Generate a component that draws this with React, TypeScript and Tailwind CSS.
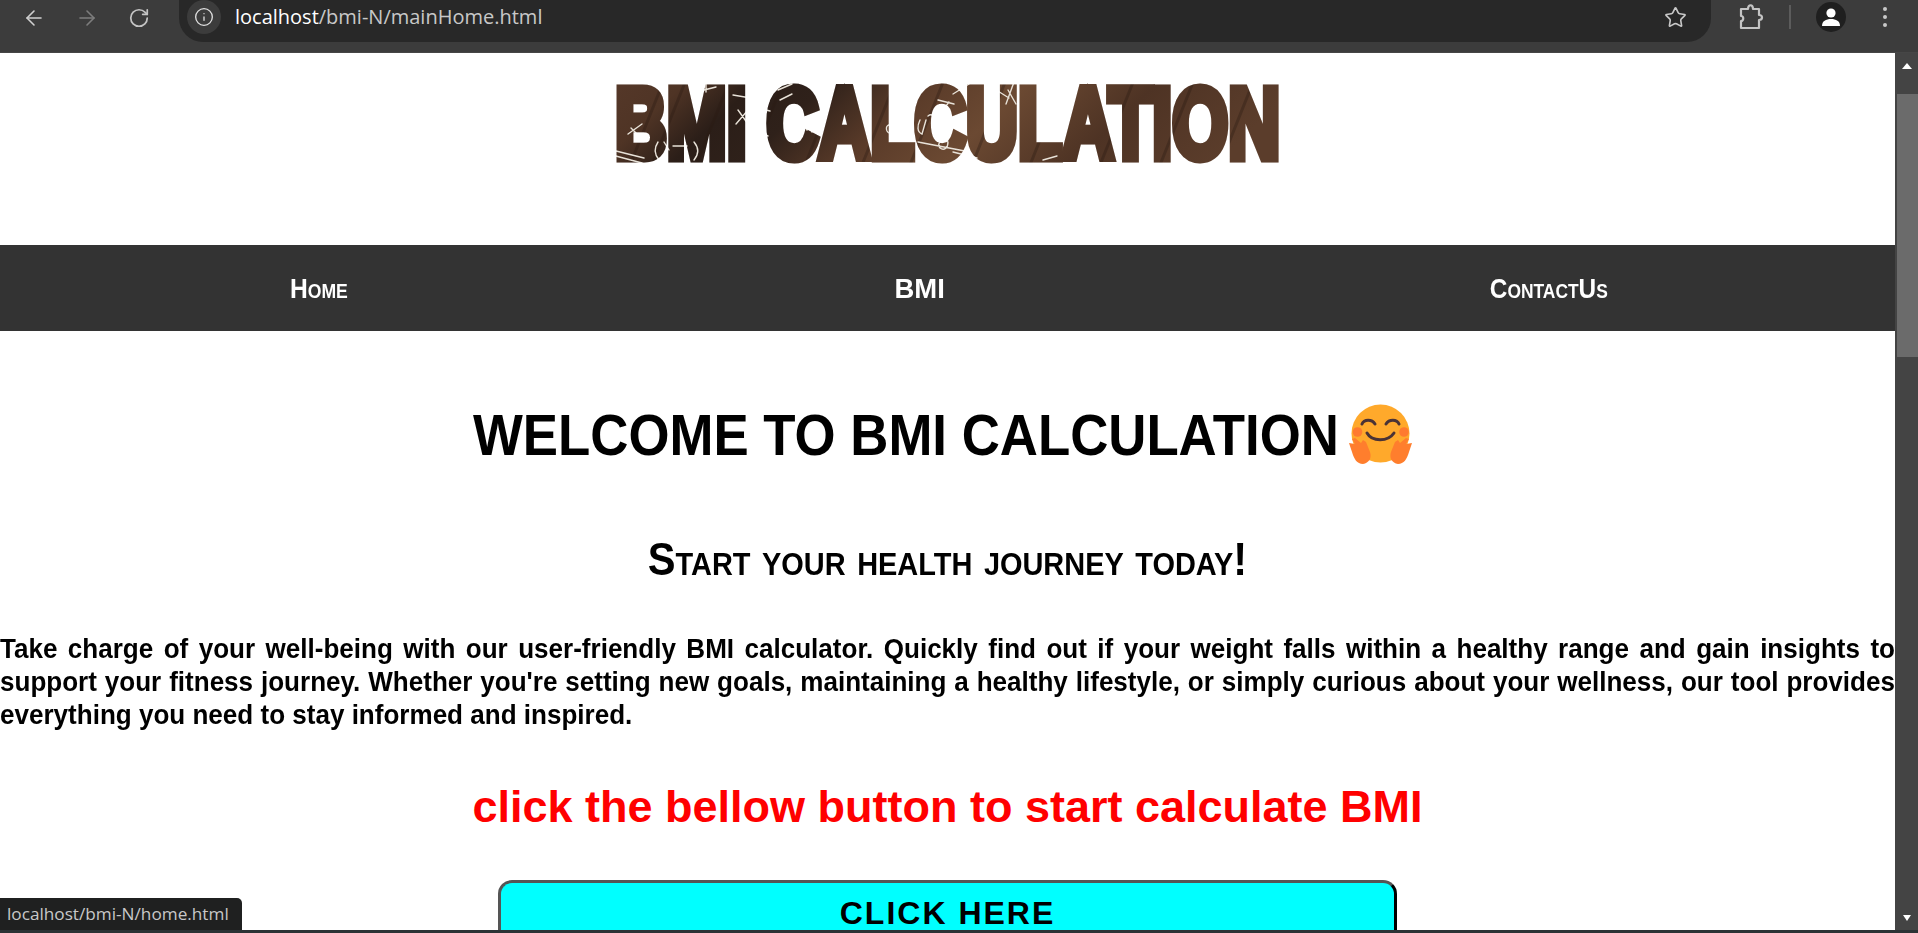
import { ArrowLeft, ArrowRight, RotateCw, Info, Star } from "lucide-react";

function Hug() {
  return (
    <svg width="66" height="62" viewBox="0 0 66 62" className="shrink-0 ml-[11px]">
      <circle cx="32.5" cy="29.5" r="29" fill="#FFA92B" />
      <circle cx="9.5" cy="28" r="4.8" fill="#FF7A2F" />
      <circle cx="56" cy="28" r="4.8" fill="#FF7A2F" />
      <path d="M14 20c2-5 10-5 13 0M38 20c3-5 11-5 13 0M19 29c5 9 21 9 27 0" fill="none" stroke="#4A3336" strokeWidth="3" strokeLinecap="round" />
      <path d="M1 39l6 1-3-5 3-1 6 5 2-3 3 2 4 10c2 6-1 11-7 12-6 0-9-5-11-12z" fill="#FF7E2D" />
      <path d="M64 39l-6 1 3-5-3-1-6 5-2-3-3 2-4 10c-2 6 1 11 7 12 6 0 9-5 11-12z" fill="#FF7E2D" />
    </svg>
  );
}

function Logo() {
  const grain = [
    "M30 100L70 0", "M52 100L92 0", "M96 100L136 0", "M150 100L190 0", "M205 100L245 0", "M262 100L302 0",
    "M310 100L350 0", "M372 100L412 0", "M430 100L470 0", "M500 100L540 0", "M560 100L600 0", "M620 100L660 0",
  ];
  return (
    <svg width="700" height="100" viewBox="0 0 700 100" className="shrink-0">
      <defs>
        <linearGradient id="wood" x1="0" y1="0" x2="1" y2="0.15">
          <stop offset="0" stopColor="#57392a" />
          <stop offset="0.14" stopColor="#4f3425" />
          <stop offset="0.24" stopColor="#2b1e18" />
          <stop offset="0.34" stopColor="#2f211a" />
          <stop offset="0.48" stopColor="#5a3b29" />
          <stop offset="0.62" stopColor="#6b4932" />
          <stop offset="0.8" stopColor="#4e3324" />
          <stop offset="1" stopColor="#5b3d2b" />
        </linearGradient>
        <mask id="logoText">
          <text
            x="17"
            y="87.5"
            fontFamily="'Liberation Sans', sans-serif"
            fontWeight="700"
            fontSize="100"
            textLength="665"
            lengthAdjust="spacingAndGlyphs"
            fill="white"
            stroke="white"
            strokeWidth="9"
            strokeLinejoin="miter"
          >
            BMI CALCULATION
          </text>
        </mask>
      </defs>
      <g mask="url(#logoText)">
        <rect width="700" height="100" fill="url(#wood)" />
        <g stroke="#2a1a12" strokeWidth="3" opacity="0.35">
          {grain.map((d) => (
            <path key={d} d={d} />
          ))}
        </g>
        <g fill="none" stroke="#e8e2d8" strokeWidth="1.4" strokeLinecap="round">
          <path d="M14 80l32 8M14 85l30 8M30 64l14-10M33 58l8 8M60 72c-4 6-4 12 1 18M66 72l5 8M75 76h14M96 72c5 6 5 12 0 18M106 20l12-3M108 22v-8" />
          <path d="M135 25l36 6M140 40l10 14M150 40l-12 14M160 38l12 3M154 60l16 6M180 20l14-6M182 30l12-6M190 52c6 6 10 6 14 0l5 8 6-10M210 50l4 12M218 50l4 12" />
          <path d="M295 56c-4-3-8 0-6 5 2 4 7 3 8-1M300 62h12M302 67h12M322 50c-3 6-3 12 2 14l4-14M330 46c4-3 8 1 4 6l6 10M342 62l8 6M350 72c-6-3-12 1-8 6 4 3 8 0 8-6M320 72l52 10M355 82l24 6" />
          <path d="M355 24l16-10M340 30l16 4M345 40l6-8M395 18l16 10M410 20l8 14M416 12l-8 22M445 90l14-4" />
        </g>
      </g>
    </svg>
  );
}

export default function App() {
  return (
    <div className="h-[933px] w-[1918px] overflow-hidden flex flex-col relative bg-white font-['Liberation_Sans',sans-serif]">
      <div className="h-[53px] shrink-0 bg-[#3c3c3c] border-b border-[#464646] flex items-start text-[#c8c8c8]">
        <div className="flex items-center h-[36px] pl-[22px] gap-[29px] shrink-0">
          <ArrowLeft size={24} strokeWidth={1.6} className="text-[#d0d0d0]" />
          <ArrowRight size={24} strokeWidth={1.6} className="text-[#7d7d7d]" />
          <RotateCw size={22} strokeWidth={1.9} className="text-[#c4c4c4]" />
        </div>
        <div className="ml-[29px] w-[1532px] h-[42px] bg-[#282828] rounded-b-[24px] flex items-center pl-[8px] pr-[24px]">
          <div className="w-[34px] h-[34px] rounded-full bg-[#3c3c3c] flex items-center justify-center -mt-[8px]">
            <Info size={20} strokeWidth={1.6} className="text-[#e0e0e0]" />
          </div>
          <div className="ml-[14px] -mt-[8px] text-[20px] font-['Open_Sans',sans-serif] text-[#c8c8c8] leading-[32px]">
            <span className="text-white">localhost</span>/bmi-N/mainHome.html
          </div>
          <Star size={23} strokeWidth={1.7} className="ml-auto -mt-[8px] text-[#c8c8c8]" />
        </div>
        <div className="flex items-center h-[33px] ml-[27px]">
          <svg width="26" height="28" viewBox="0 0 26 28" fill="none" stroke="#c4c4c4" strokeWidth="2.2" strokeLinejoin="round">
            <path d="M3 6h7c0-5 5-5 5 0h6v6c4 0 4 5 0 5v8H3v-7c3 0 3-5 0-5z" />
          </svg>
          <div className="w-[2px] h-[24px] bg-[#5c5c5c] ml-[25px]" />
          <div className="w-[30px] h-[30px] rounded-full bg-[#1f1f1f] ml-[25px] flex items-center justify-center">
            <svg width="20" height="20" viewBox="0 0 20 20" fill="white">
              <circle cx="10" cy="6" r="4.6" />
              <path d="M1 19c0-5 4-7 9-7s9 2 9 7z" />
            </svg>
          </div>
          <div className="flex flex-col gap-[4px] ml-[37px]">
            <span className="w-[4px] h-[4px] rounded-full bg-[#c8c8c8]" />
            <span className="w-[4px] h-[4px] rounded-full bg-[#c8c8c8]" />
            <span className="w-[4px] h-[4px] rounded-full bg-[#c8c8c8]" />
          </div>
        </div>
      </div>

      <div className="flex flex-1 min-h-0">
        <main className="flex-1 min-w-0 overflow-hidden text-black">
          <header className="h-[192px] flex justify-center pt-[17px]">
            <h1 className="contents">
              <Logo />
            </h1>
          </header>
          <nav className="h-[86px] bg-[#333333] flex justify-between items-center pl-[289px] pr-[288px] text-white font-bold text-[28px] [font-variant:small-caps]">
            <a className="w-[59px] flex justify-center whitespace-nowrap mt-[2px]"><span className="inline-block scale-x-[0.88]">Home</span></a>
            <a className="w-[50px] flex justify-center whitespace-nowrap mt-[2px]"><span className="inline-block scale-x-[0.98]">BMI</span></a>
            <a className="w-[116px] flex justify-center whitespace-nowrap mt-[2px]"><span className="inline-block scale-x-[0.87]">ContactUs</span></a>
          </nav>
          <section className="flex items-center justify-center mt-[68px] h-[72px] pr-[8px]">
            <h2 className="w-[864px] shrink-0 font-bold text-[58px] leading-none whitespace-nowrap">
              <span className="inline-block origin-left scale-x-[0.91]">WELCOME TO BMI CALCULATION</span>
            </h2>
            <Hug />
          </section>
          <h3 className="mt-[62px] text-center font-bold text-[46px] leading-[52px] [font-variant:small-caps] scale-x-[0.904]">
            Start your health journey today!
          </h3>
          <p className="mt-[47px] w-[2037.6px] origin-left scale-x-[0.93] text-[28px] leading-[33px] font-bold text-justify">
            Take charge of your well-being with our user-friendly BMI calculator. Quickly find out if your weight falls within a healthy range and gain insights to support your fitness journey. Whether you're setting new goals, maintaining a healthy lifestyle, or simply curious about your wellness, our tool provides everything you need to stay informed and inspired.
          </p>
          <div className="mt-[50px] text-center text-[#ff0000] font-bold text-[45px] leading-[52px]">
            click the bellow button to start calculate BMI
          </div>
          <div className="flex justify-center mt-[47px]">
            <button className="w-[899px] h-[66px] shrink-0 bg-[#00ffff] rounded-[14px] border-[3px] border-t-[#555555] border-l-[#555555] border-r-black border-b-black font-bold text-[32px] tracking-[2px] text-black">
              CLICK HERE
            </button>
          </div>
        </main>
        <div className="w-[23px] shrink-0 bg-[#444444] flex flex-col items-end relative">
          <div className="w-0 h-0 mt-[10px] mr-[6px] border-l-[5px] border-r-[5px] border-b-[6px] border-l-transparent border-r-transparent border-b-white" />
          <div className="w-[21px] h-[263px] bg-[#6b6b6b] mt-[25px]" />
          <div className="w-0 h-0 mt-auto mb-[9px] mr-[7px] border-l-[4px] border-r-[4px] border-t-[6px] border-l-transparent border-r-transparent border-t-white" />
        </div>
      </div>
      <div className="h-[3px] shrink-0 bg-[#2b3335]" />
      <div className="absolute left-0 bottom-[3px] w-[242px] h-[32px] bg-[#1f2020] rounded-tr-[5px] text-[#c8c8c8] text-[17.2px] font-['Open_Sans',sans-serif] leading-[32px] pl-[7px] whitespace-nowrap">
        localhost/bmi-N/home.html
      </div>
    </div>
  );
}
